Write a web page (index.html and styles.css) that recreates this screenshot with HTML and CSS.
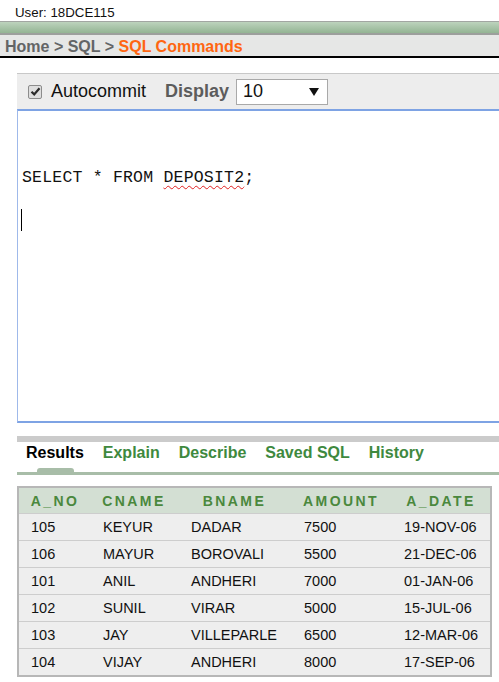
FILE: index.html
```html
<!DOCTYPE html>
<html>
<head>
<meta charset="utf-8">
<link rel="stylesheet" href="styles.css">
</head>
<body>
<div class="user">User: 18DCE115</div>
<div class="greenbar"></div>
<div class="crumbs"><span class="crumb">Home &gt; SQL &gt; </span><span class="crumb-cur">SQL Commands</span></div>
<div class="main">
  <div class="toolbar">
    <span class="check"><svg width="11" height="11" viewBox="0 0 11 11"><path d="M1.5 5.8 L4.2 8.4 L9.5 2.2" fill="none" stroke="#2b2b2b" stroke-width="2.2"/></svg></span>
    <span class="lbl">Autocommit</span>
    <span class="disp">Display</span>
    <div class="select"><span>10</span><svg width="10" height="8" viewBox="0 0 10 8"><path d="M0 0 H10 L5 8 Z" fill="#111"/></svg></div>
  </div>
  <div class="editor">
    <div class="code">SELECT * FROM <span class="spell">DEPOSIT2</span>;</div>
    <div class="caret"></div>
  </div>
  <div class="tabbar"></div>
  <div class="tabs">
    <span class="tab active">Results</span>
    <span class="tab">Explain</span>
    <span class="tab">Describe</span>
    <span class="tab">Saved SQL</span>
    <span class="tab">History</span>
  </div>
  <div class="tabline"><span class="pill"></span></div>
  <div class="table">
    <div class="th">A_NO</div><div class="th">CNAME</div><div class="th">BNAME</div><div class="th">AMOUNT</div><div class="th">A_DATE</div>
    <div class="td">105</div><div class="td">KEYUR</div><div class="td">DADAR</div><div class="td">7500</div><div class="td">19-NOV-06</div>
    <div class="td">106</div><div class="td">MAYUR</div><div class="td">BOROVALI</div><div class="td">5500</div><div class="td">21-DEC-06</div>
    <div class="td">101</div><div class="td">ANIL</div><div class="td">ANDHERI</div><div class="td">7000</div><div class="td">01-JAN-06</div>
    <div class="td">102</div><div class="td">SUNIL</div><div class="td">VIRAR</div><div class="td">5000</div><div class="td">15-JUL-06</div>
    <div class="td">103</div><div class="td">JAY</div><div class="td">VILLEPARLE</div><div class="td">6500</div><div class="td">12-MAR-06</div>
    <div class="td">104</div><div class="td">VIJAY</div><div class="td">ANDHERI</div><div class="td">8000</div><div class="td">17-SEP-06</div>
  </div>
</div>
</body>
</html>
```

FILE: styles.css
```css
html, body {
  margin: 0;
  padding: 0;
  background: #ffffff;
  overflow: hidden;
}
body {
  font-family: "Liberation Sans", Arial, sans-serif;
  color: #111;
  width: 499px;
}
.user {
  height: 21px;
  box-sizing: border-box;
  padding: 5px 0 0 15px;
  font-size: 13.3px;
  line-height: 15px;
  color: #111;
}
.greenbar {
  height: 11px;
  border-top: 1px solid #a2a6a2;
  border-bottom: 2px solid #9c9f9c;
  background: linear-gradient(#bdd3bd, #93b493);
}
.crumbs {
  height: 23px;
  box-sizing: border-box;
  padding: 2px 0 0 5px;
  line-height: 19px;
  background: #e6e7e6;
  border-bottom: 2px solid #000;
  font-size: 16px;
  font-weight: bold;
  white-space: nowrap;
}
.crumb { color: #636566; }
.crumb-cur { color: #ff6611; }
.main {
  margin: 15px 0 0 17px;
  width: 500px;
}
.toolbar {
  height: 35px;
  border-top: 1px solid #c8c8c8;
  background: #ededed;
  display: flex;
  align-items: center;
  padding-left: 11px;
}
.check {
  width: 12px;
  height: 12px;
  border: 1px solid #8c8c8c;
  border-radius: 2px;
  background: #dedede;
  display: flex;
  align-items: center;
  justify-content: center;
}
.lbl {
  margin-left: 9px;
  font-size: 18px;
  color: #111;
}
.disp {
  margin-left: 19px;
  font-size: 18px;
  font-weight: bold;
  color: #5c5c5c;
}
.select {
  margin-left: 7px;
  width: 92px;
  height: 26px;
  box-sizing: border-box;
  border: 1px solid #a9a9a9;
  background: #fff;
  display: flex;
  align-items: center;
  justify-content: space-between;
  padding: 0 8px 0 6px;
  font-size: 18px;
  color: #111;
}
.editor {
  border-top: 2px solid #7ea3e4;
  border-left: 1px solid #9fb9ea;
  border-bottom: 2px solid #7ea3e4;
  padding: 56px 0 0 4px;
  height: 254px;
}
.code {
  font-family: "Liberation Mono", "DejaVu Sans Mono", monospace;
  font-size: 16.5px;
  letter-spacing: 0.2px;
  line-height: 22px;
  color: #111;
  white-space: pre;
}
.spell {
  text-decoration: underline wavy #e02020;
  text-decoration-thickness: 1.2px;
  text-underline-offset: 3px;
}
.caret {
  margin: 20px 0 0 -1px;
  width: 1px;
  height: 22px;
  background: #000;
}
.tabbar {
  margin-top: 13px;
  height: 6px;
  background: #cbcbcb;
}
.tabs {
  height: 30px;
  box-sizing: border-box;
  padding: 1px 0 0 9px;
  display: flex;
  gap: 19px;
  font-size: 16px;
  font-weight: bold;
  line-height: 20px;
  color: #3e893e;
}
.tab.active { color: #000; }
.tabline {
  height: 3px;
  background: #a8bda8;
  position: relative;
}
.pill {
  position: absolute;
  left: 20px;
  top: -4px;
  width: 37px;
  height: 5px;
  background: #a8bda8;
  border-radius: 3px 3px 0 0;
}
.table {
  margin-top: 11px;
  width: 475px;
  box-sizing: border-box;
  border: 2px solid #b7b7b7;
  display: grid;
  grid-template-columns: 70px 88px 113px 100px 1fr;
  background: #eeeeee;
}
.th {
  height: 25px;
  line-height: 26px;
  background: #d3dfd3;
  color: #4a883d;
  font-size: 14px;
  font-weight: bold;
  letter-spacing: 2.4px;
  text-align: center;
  padding-left: 2px;
}
.td {
  border-top: 1px solid #cdcdcd;
  height: 27px;
  box-sizing: border-box;
  padding: 1px 0 0 14px;
  line-height: 25px;
  font-size: 14.5px;
  color: #111;
  white-space: nowrap;
}
.td:nth-child(5n+1) { padding-left: 12px; }
```
